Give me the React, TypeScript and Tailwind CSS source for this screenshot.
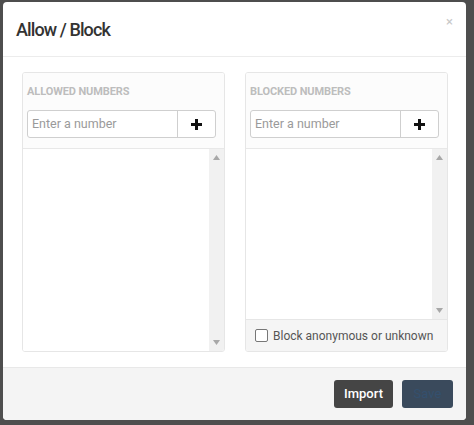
import React from "react";

function ScrollList({ h }: { h: string }) {
  return (
    <div className={`flex ${h} border-t border-[#e8e8e8]`}>
      <div className="flex-1 bg-white" />
      <div className="w-[15px] bg-[#f1f1f1] flex flex-col items-center justify-between py-[6px]">
        <svg width="7" height="5" viewBox="0 0 7 5"><path d="M0 5 L3.5 0 L7 5 Z" fill="#a8a8a8" /></svg>
        <svg width="7" height="5" viewBox="0 0 7 5"><path d="M0 0 L3.5 5 L7 0 Z" fill="#a8a8a8" /></svg>
      </div>
    </div>
  );
}

function Panel({ title, blocked }: { title: string; blocked?: boolean }) {
  return (
    <div className="w-[203px] h-[280px] border border-[#e6e6e6] rounded-[3px] flex flex-col overflow-hidden">
      <div className="bg-[#fcfcfc] pt-[12px] pb-[10px] pl-[4px] pr-[8px]">
        <div className="text-[11px] leading-[14px] font-bold text-[#bdbdbd] tracking-[-0.1px]">{title}</div>
        <div className="mt-[11px] flex h-[28px] border border-[#cfcfcf] rounded-[3px] bg-white overflow-hidden">
          <div className="flex-1 flex items-center pl-[4px] text-[12.5px] text-[#9a9a9a]">Enter a number</div>
          <div className="w-[38px] border-l border-[#cfcfcf] flex items-center justify-center">
            <svg width="11" height="11" viewBox="0 0 11 11"><path d="M4 0h3v4h4v3H7v4H4V7H0V4h4z" fill="#111" /></svg>
          </div>
        </div>
      </div>
      {blocked ? (
        <>
          <ScrollList h="h-[171px]" />
          <div className="flex-1 bg-[#f5f5f5] border-t border-[#e6e6e6] flex items-center pl-[9px] gap-[5px]">
            <div className="w-[13px] h-[13px] border border-[#777] rounded-[2px] bg-white" />
            <span className="text-[12px] text-[#555]">Block anonymous or unknown</span>
          </div>
        </>
      ) : (
        <ScrollList h="flex-1" />
      )}
    </div>
  );
}

export default function App() {
  return (
    <div className="w-[474px] h-[425px] bg-[#4e4e4e] pt-[2px] pl-[3px]" style={{ fontFamily: "Roboto, 'Liberation Sans', sans-serif" }}>
      <div className="w-[463px] h-[418px] bg-white rounded-[4px] flex flex-col overflow-hidden">
        <div className="h-[55px] border-b border-[#ececec] flex items-center justify-between pl-[13px] pr-[13px]">
          <span className="text-[18px] font-medium tracking-[-0.9px] text-[#333]">Allow / Block</span>
          <span className="text-[13px] text-[#c8c8c8] -mt-[14px]">×</span>
        </div>
        <div className="flex gap-[20px] pt-[15px] pl-[19px] h-[310px]">
          <Panel title="ALLOWED NUMBERS" />
          <Panel title="BLOCKED NUMBERS" blocked />
        </div>
        <div className="flex-1 bg-[#f4f4f4] border-t border-[#e8e8e8] flex items-center justify-end gap-[9px] pr-[13px]">
          <div className="w-[59px] h-[28px] bg-[#454545] rounded-[3px] flex items-center justify-center text-[13px] font-medium text-white">Import</div>
          <div className="w-[51px] h-[28px] bg-[#3a4a5c] rounded-[3px] flex items-center justify-center text-[13px] text-[#34506e]">Save</div>
        </div>
      </div>
    </div>
  );
}
